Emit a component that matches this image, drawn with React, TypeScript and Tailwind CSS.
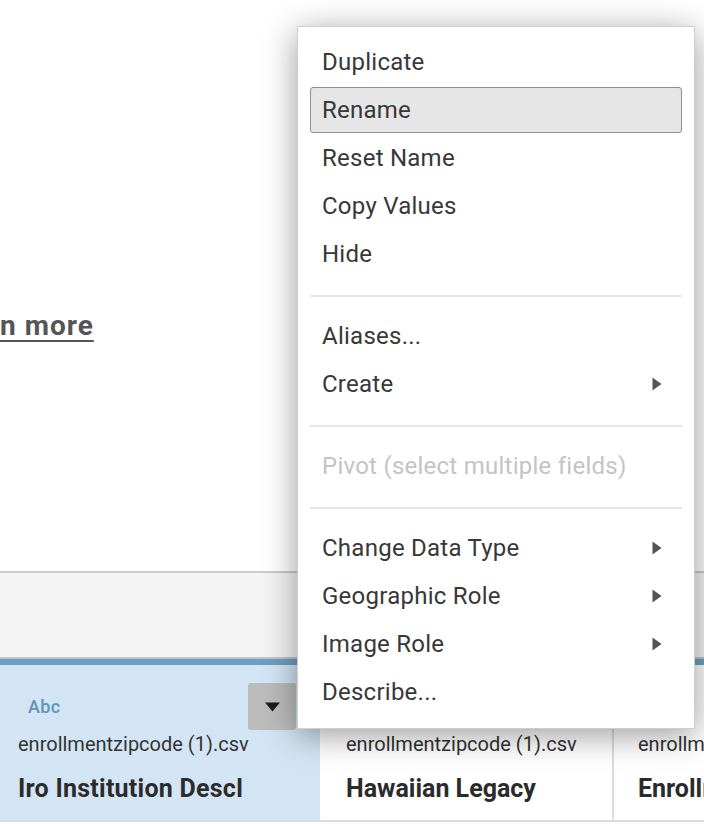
import React from "react";

type Item = { label: string; arrow?: boolean; disabled?: boolean; active?: boolean };

const groups: Item[][] = [
  [
    { label: "Duplicate" },
    { label: "Rename", active: true },
    { label: "Reset Name" },
    { label: "Copy Values" },
    { label: "Hide" },
  ],
  [{ label: "Aliases..." }, { label: "Create", arrow: true }],
  [{ label: "Pivot (select multiple fields)", disabled: true }],
  [
    { label: "Change Data Type", arrow: true },
    { label: "Geographic Role", arrow: true },
    { label: "Image Role", arrow: true },
    { label: "Describe..." },
  ],
];

function Arrow() {
  return (
    <svg width="10" height="14" viewBox="0 0 10 14" className="shrink-0">
      <path d="M0.5 0.5 L9.5 7 L0.5 13.5 Z" fill="#555555" />
    </svg>
  );
}

function MenuItem({ item }: { item: Item }) {
  return (
    <div className="h-[48px] py-[1px]">
      <div
        className={
          item.active
            ? "flex h-full items-center justify-between rounded-[3px] border border-[#8f8f8f] bg-[#e6e6e6] pl-[11px] pr-[19px]"
            : "flex h-full items-center justify-between rounded-[3px] border border-transparent pl-[11px] pr-[19px]"
        }
      >
        <span
          className={
            item.disabled
              ? "text-[24px] leading-[30px] tracking-[0.25px] text-[#c4c4c4]"
              : "text-[24px] leading-[30px] tracking-[0.25px] text-[#383838]"
          }
        >
          {item.label}
        </span>
        {item.arrow ? <Arrow /> : null}
      </div>
    </div>
  );
}

export default function App() {
  return (
    <div className="relative h-[824px] w-[704px] overflow-hidden bg-white font-['Roboto',sans-serif]">
      {/* top area */}
      <div className="h-[571px] pt-[309px]">
        <span className="text-[28px] font-bold leading-[34px] tracking-[1px] text-[#555555] underline decoration-2 underline-offset-[5px]">
          n more
        </span>
      </div>

      {/* gray band */}
      <div className="h-[86px] border-t-2 border-[#cbcbcb] bg-[#f4f4f4]" />
      <div className="h-[2px] bg-[#c4c4c4]" />
      <div className="h-[6px] bg-[#6e9fc3]" />

      {/* columns */}
      <div className="flex h-[157px] border-b-2 border-[#dadada]">
        <div className="w-[320px] shrink-0 bg-[#d3e5f4] pl-[18px]">
          <div className="mt-[18px] flex h-[47px] items-center justify-between pl-[10px] pr-[24px]">
            <span className="text-[18px] font-medium tracking-[0.3px] text-[#5c95ba]">Abc</span>
            <div className="flex h-[47px] w-[48px] items-center justify-center rounded-[3px] bg-[#bcbcbc]">
              <svg width="15" height="10" viewBox="0 0 15 10">
                <path d="M0 0.5 L15 0.5 L7.5 9.5 Z" fill="#1a1a1a" />
              </svg>
            </div>
          </div>
          <div className="mt-[2px] whitespace-nowrap text-[20px] leading-[24px] text-[#333333]">
            enrollmentzipcode (1).csv
          </div>
          <div className="mt-[18px] whitespace-nowrap text-[25px] font-bold leading-[30px] tracking-[0.25px] text-[#2b2b2b]">
            Iro Institution Descl
          </div>
        </div>
        <div className="w-[294px] shrink-0 border-r-2 border-[#dcdcdc] pl-[26px]">
          <div className="mt-[67px] whitespace-nowrap text-[20px] leading-[24px] text-[#333333]">
            enrollmentzipcode (1).csv
          </div>
          <div className="mt-[18px] whitespace-nowrap text-[25px] font-bold leading-[30px] text-[#2b2b2b]">
            Hawaiian Legacy
          </div>
        </div>
        <div className="min-w-0 flex-1 overflow-hidden pl-[24px]">
          <div className="mt-[67px] whitespace-nowrap text-[20px] leading-[24px] text-[#333333]">
            enrollmentzipcode (1).csv
          </div>
          <div className="mt-[18px] whitespace-nowrap text-[25px] font-bold leading-[30px] text-[#2b2b2b]">
            Enrollment
          </div>
        </div>
      </div>

      {/* context menu */}
      <div className="absolute left-[297px] top-[26px] w-[398px] border border-[#cfcfcf] bg-white px-[12px] pb-[12px] pt-[11px] shadow-[0_6px_32px_rgba(0,0,0,0.4)]">
        {groups.map((g, gi) => (
          <div key={gi}>
            {gi > 0 ? <div className="mb-[15px] mt-[17px] h-[2px] bg-[#e6e6e6]" /> : null}
            {g.map((it) => (
              <MenuItem key={it.label} item={it} />
            ))}
          </div>
        ))}
      </div>
    </div>
  );
}
